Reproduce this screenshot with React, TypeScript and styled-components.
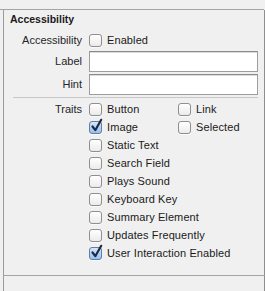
import React from "react";
import styled, { createGlobalStyle } from "styled-components";

const Global = createGlobalStyle`
  html, body { margin: 0; padding: 0; background: #f0f0f0; }
  body { font-family: "Liberation Sans", Arial, sans-serif; font-size: 11px; color: #1a1a1a; }
`;

const Frame = styled.div`
  width: 265px;
  height: 291px;
  display: flex;
  flex-direction: column;
  background: #f0f0f0;
  overflow: hidden;
`;

const TopStrip = styled.div`
  height: 9px;
  flex: none;
  border-bottom: 1px solid #a4a4a4;
  margin-right: 1px;
`;

const Panel = styled.div`
  margin-left: 3px;
  width: 260px;
  height: 265px;
  flex: none;
  border-left: 1px solid #9c9c9c;
  border-right: 1px solid #8e8e8e;
  border-bottom: 1px solid #a4a4a4;
  display: flex;
  flex-direction: column;
`;

const Footer = styled.div`
  flex: 1;
  margin-left: 3px;
  width: 260px;
  border-left: 1px solid #9c9c9c;
  border-right: 1px solid #8e8e8e;
`;

const Heading = styled.div`
  font-weight: bold;
  font-size: 10.5px;
  line-height: 14px;
  padding: 2px 0 0 6px;
  color: #1a1a1a;
`;

const Form = styled.div`
  margin-top: 5px;
  display: grid;
  grid-template-columns: 78px 1fr;
  column-gap: 7px;
  row-gap: 2px;
  padding-right: 6px;
`;

const FieldLabel = styled.div<{ $h?: number }>`
  text-align: right;
  line-height: ${(p) => p.$h ?? 18}px;
  color: #262626;
`;

const Check = styled.label`
  display: flex;
  align-items: center;
  gap: 5px;
  height: 18px;
  white-space: nowrap;
  letter-spacing: 0.1px;
`;

const Box = styled.span<{ $on?: boolean }>`
  position: relative;
  width: 11px;
  height: 11px;
  flex: none;
  border: 1px solid ${(p) => (p.$on ? "#5e7fa8" : "#8f8f8f")};
  border-radius: 3px;
  background: ${(p) =>
    p.$on
      ? "linear-gradient(#d6e6f8, #98c0ec)"
      : "linear-gradient(#ffffff, #ebebeb)"};
  box-shadow: 0 1px 0 rgba(255,255,255,0.6);
`;

const Tick = styled.svg`
  position: absolute;
  left: 1px;
  top: -3px;
  overflow: visible;
`;

const Input = styled.div`
  height: 19px;
  border: 1px solid #9d9d9d;
  border-top-color: #8a8a8a;
  background: #fff;
  box-shadow: inset 0 1px 0 #dcdcdc;
`;

const Sep = styled.div`
  grid-column: 1 / -1;
  margin-left: 9px;
  height: 1px;
  background: #c8c8c8;
`;

const Traits = styled.div`
  display: grid;
  grid-template-columns: 89px 1fr;
`;

const Box1 = ({ on }: { on?: boolean }) => (
  <Box $on={on}>
    {on && (
      <Tick width="11" height="13" viewBox="0 0 11 13">
        <path d="M1.5 7.5 L4.3 11.2 L10.2 0.8" fill="none" stroke="#1c2a44" strokeWidth="2.2" strokeLinecap="round" strokeLinejoin="round" />
      </Tick>
    )}
  </Box>
);

const CheckItem = ({ label, on }: { label: string; on?: boolean }) => (
  <Check>
    <Box1 on={on} />
    <span>{label}</span>
  </Check>
);

export default function App() {
  return (
    <Frame>
      <Global />
      <TopStrip />
      <Panel>
        <Heading>Accessibility</Heading>
        <Form>
          <FieldLabel>Accessibility</FieldLabel>
          <CheckItem label="Enabled" />
          <FieldLabel $h={21}>Label</FieldLabel>
          <Input />
          <FieldLabel $h={21}>Hint</FieldLabel>
          <Input />
          <Sep />
          <FieldLabel>Traits</FieldLabel>
          <Traits>
            <CheckItem label="Button" />
            <CheckItem label="Link" />
            <CheckItem label="Image" on />
            <CheckItem label="Selected" />
            <CheckItem label="Static Text" />
            <span />
            <CheckItem label="Search Field" />
            <span />
            <CheckItem label="Plays Sound" />
            <span />
            <CheckItem label="Keyboard Key" />
            <span />
            <CheckItem label="Summary Element" />
            <span />
            <CheckItem label="Updates Frequently" />
            <span />
            <CheckItem label="User Interaction Enabled" on />
            <span />
          </Traits>
        </Form>
      </Panel>
      <Footer />
    </Frame>
  );
}
